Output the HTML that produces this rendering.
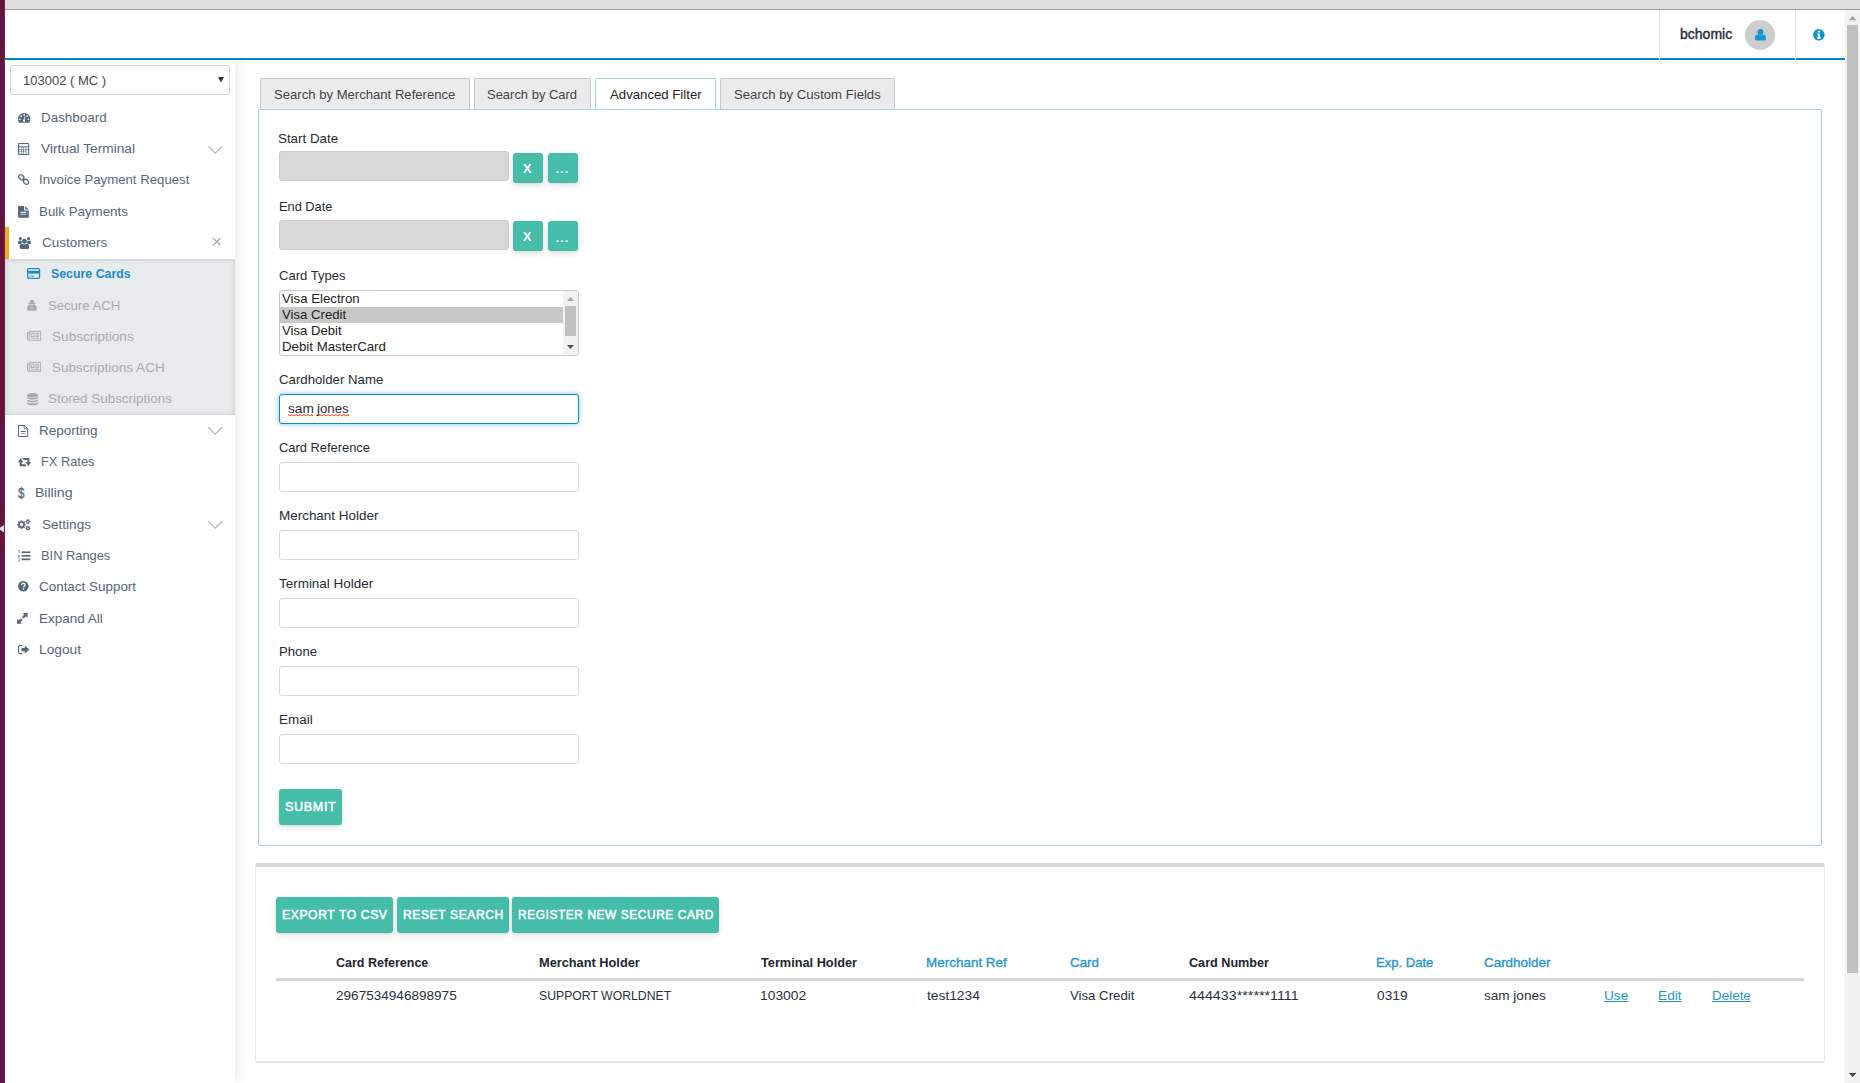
<!DOCTYPE html>
<html lang="en">
<head>
<meta charset="utf-8">
<title>Secure Cards</title>
<style>
*{box-sizing:border-box}
html,body{margin:0;padding:0}
body{width:1860px;height:1083px;overflow:hidden;background:#fff;position:relative;font-family:"Liberation Sans",sans-serif;font-size:13px;color:#2b2b2b}
.a{position:absolute}
.t{position:absolute;white-space:pre;font-size:13px;transform-origin:0 50%;display:block}
a.t{text-decoration:underline}
.topbar{left:0;top:0;width:1860px;height:9px;background:#dedede}
.topline{left:0;top:9px;width:1860px;height:1px;background:#9b9b9b}
.strip{left:0;top:0;width:5px;height:1083px;background:linear-gradient(90deg,#66133d 0,#66133d 4px,#6f2555 4px,#6f2555 5px)}
.header{left:5px;top:10px;width:1840px;height:48px;background:#fff}
.hline{left:5px;top:58px;width:1840px;height:2px;background:#0087c4}
.sep{top:10px;width:1px;height:50px;background:#e6e6e6}
.avatar{left:1745px;top:20px;width:30px;height:30px;border-radius:50%;background:#cdcdcd}
.sbar{left:1845px;top:10px;width:15px;height:1073px;background:#f0f2f1}
.sthumb{left:1847px;top:25px;width:11px;height:948px;background:#c1c1c1}
.sidebar{left:5px;top:60px;width:230px;height:1023px;background:#fff;box-shadow:1px 0 12px rgba(0,0,0,.10)}
.sel{left:10px;top:65px;width:220px;height:30px;border:1px solid #d3d3d3;border-radius:3px;background:#fff}
.orange{left:5px;top:227px;width:4px;height:32px;background:#f3ae1c}
.submenu{left:5px;top:259px;width:230px;height:155.5px;background:#e7ebeb;box-shadow:inset 0 3px 4px -2px rgba(0,0,0,.10),inset 0 -3px 4px -2px rgba(0,0,0,.10),inset -4px 0 5px -3px rgba(0,0,0,.08),inset 4px 0 5px -3px rgba(0,0,0,.08)}
.tab{top:78px;height:31px;border:1px solid #c9c9c9;border-bottom:none;border-radius:2px 2px 0 0;background:#ebebeb}
.tab.on{background:#fff;border-color:#a3d3de}
.panel{left:258px;top:109px;width:1564px;height:737px;border:1px solid #a3d3de;border-radius:2px;background:#fff}
.dinp{left:279px;width:230px;height:30px;border:1px solid #ccc;border-radius:3px;background:#d8d8d8}
.inp{left:279px;width:300px;height:30px;border:1px solid #d8d8d8;border-radius:3px;background:#fff}
.inp.focus{border-color:#0b8dc6;box-shadow:0 0 5px rgba(11,141,198,.5)}
.btn{background:#45bda8;border-radius:3px;box-shadow:0 3px 7px rgba(0,0,0,.10),0 1px 3px rgba(0,0,0,.07)}
.lbox{left:279px;top:290px;width:300px;height:66px;border:1px solid #c8c8c8;border-radius:3px;background:#fff;overflow:hidden}
.lsel{left:280px;top:307px;width:283px;height:16px;background:#c8c8c8}
.ltrack{left:563px;top:291px;width:15px;height:64px;background:#f1f1f1}
.lthumb{left:565px;top:306px;width:11px;height:30px;background:#c1c1c1}
.card{left:255px;top:863px;width:1570px;height:200px;border:1px solid #e6e6e6;border-top:4px solid #d6d6d6;border-bottom:2px solid #e3e3e3;border-radius:2px;background:#fff;}
.thline{left:276px;top:978px;width:1528px;height:3px;background:#d8d8d8}
svg.a{overflow:visible}

</style>
</head>
<body>
<div class="a topbar"></div>
<div class="a topline"></div>
<!-- page scrollbar -->
<div class="a sbar"></div>
<div class="a sthumb"></div>
<svg class="a" style="left:1848.8px;top:15.8px" width="7.4" height="4.2" viewBox="0 0 7.4 4.2"><path d="M0 4.2 L3.7 0 L7.4 4.2 Z" fill="#a0a0a0"/></svg>
<svg class="a" style="left:1848.8px;top:1072.5px" width="7.4" height="4.3" viewBox="0 0 7.4 4.3"><path d="M0 0 L7.4 0 L3.7 4.3 Z" fill="#484848"/></svg>

<!-- main content -->
<div class="a panel"></div>
<div class="a tab" style="left:260px;width:210px"></div>
<div class="a tab" style="left:474px;width:117px"></div>
<div class="a tab on" style="left:595px;width:121px"></div>
<div class="a tab" style="left:720px;width:175px"></div>

<div class="a dinp" style="top:151px"></div>
<div class="a btn" style="left:513px;top:153px;width:30px;height:30px"></div>
<div class="a btn" style="left:548px;top:153px;width:30px;height:30px"></div>
<div class="a dinp" style="top:220px"></div>
<div class="a btn" style="left:513px;top:221px;width:30px;height:30px"></div>
<div class="a btn" style="left:548px;top:221px;width:30px;height:30px"></div>

<div class="a lbox"></div>
<div class="a lsel"></div>
<div class="a ltrack"></div>
<div class="a lthumb"></div>
<svg class="a" style="left:567px;top:297px" width="7" height="4" viewBox="0 0 7 4"><path d="M0 4 L3.5 0 L7 4 Z" fill="#a3a3a3"/></svg>
<svg class="a" style="left:567px;top:345px" width="7" height="4" viewBox="0 0 7 4"><path d="M0 0 L7 0 L3.5 4 Z" fill="#505050"/></svg>

<div class="a inp focus" style="top:394px"></div>
<!-- squiggle -->
<svg class="a" style="left:288px;top:413.7px" width="25.0" height="2.6" viewBox="0 0 25.0 2.6"><path d="M0 0.6 L2.0 1.9 L4.0 0.6 L6.0 1.9 L8.0 0.6 L10.0 1.9 L12.0 0.6 L14.0 1.9 L16.0 0.6 L18.0 1.9 L20.0 0.6 L22.0 1.9 L24.0 0.6 L25.0 1.9" fill="none" stroke="#ff4a3d" stroke-width="1.1" stroke-linejoin="round"/></svg>
<svg class="a" style="left:316px;top:413.7px" width="33.0" height="2.6" viewBox="0 0 33.0 2.6"><path d="M0 0.6 L2.0 1.9 L4.0 0.6 L6.0 1.9 L8.0 0.6 L10.0 1.9 L12.0 0.6 L14.0 1.9 L16.0 0.6 L18.0 1.9 L20.0 0.6 L22.0 1.9 L24.0 0.6 L26.0 1.9 L28.0 0.6 L30.0 1.9 L32.0 0.6 L33.0 1.9" fill="none" stroke="#ff4a3d" stroke-width="1.1" stroke-linejoin="round"/></svg>
<div class="a inp" style="top:462px"></div>
<div class="a inp" style="top:530px"></div>
<div class="a inp" style="top:598px"></div>
<div class="a inp" style="top:666px"></div>
<div class="a inp" style="top:734px"></div>
<div class="a btn" style="left:279px;top:789px;width:63px;height:36px"></div>

<div class="a card"></div>
<div class="a btn" style="left:276px;top:897px;width:117px;height:36px"></div>
<div class="a btn" style="left:397px;top:897px;width:112px;height:36px"></div>
<div class="a btn" style="left:512px;top:897px;width:207px;height:36px"></div>
<div class="a thline"></div>

<!-- sidebar -->
<div class="a sidebar"></div>
<div class="a sel"></div>
<svg class="a" style="left:218.1px;top:77px" width="6" height="5.6" viewBox="0 0 6 5.6"><path d="M0 0 L6 0 L3 5.6 Z" fill="#333"/></svg>
<div class="a orange"></div>
<div class="a submenu"></div>
<div class="a header"></div>
<div class="a hline"></div>
<div class="a sep" style="left:1659px"></div>
<div class="a sep" style="left:1795px"></div>
<div class="a avatar"></div>
<div class="a strip"></div>
<svg class="a" style="left:0;top:524.8px;overflow:hidden" width="4" height="7.4" viewBox="0 0 4 7.4"><path d="M4 0 L4 7.4 L-1.6 3.7 Z" fill="#dfe1df"/></svg>

<!-- icons -->
<svg class="a" style="left:17.7px;top:113px" width="12.4" height="9.8" viewBox="0 0 12.4 9.8"><path d="M6.2 0A6.2 6.2 0 0 0 0 6.2c0 1.3.4 2.5 1 3.4.1.1.3.2.4.2h9.6c.2 0 .3-.1.4-.2.6-1 1-2.1 1-3.4A6.2 6.2 0 0 0 6.200 0z" fill="#54667a"/><g fill="#fff"><circle cx="1.9" cy="6.3" r=".85"/><circle cx="3.2" cy="3.2" r=".85"/><circle cx="6.2" cy="1.9" r=".85"/><circle cx="9.2" cy="3.2" r=".85"/><circle cx="10.5" cy="6.300" r=".85"/><circle cx="6" cy="7.7" r="1.15"/></g><path d="M6 7.700L6.800 3.900" stroke="#fff" stroke-width=".8" stroke-linecap="round"/></svg>
<svg class="a" style="left:17.8px;top:142.8px" width="11.2" height="12" viewBox="0 0 11.2 12"><rect x="0" y="0" width="11.2" height="12" rx="1" fill="#54667a"/><g fill="#fff"><rect x="1.1" y="1.1" width="9.05" height="2.2"/><rect x="1.1" y="4.3" width="1.85" height="1.8"/><rect x="1.1" y="6.7" width="1.85" height="1.8"/><rect x="1.1" y="9.1" width="1.85" height="1.8"/><rect x="3.5" y="4.3" width="1.85" height="1.8"/><rect x="3.5" y="6.7" width="1.85" height="1.8"/><rect x="3.5" y="9.1" width="1.85" height="1.8"/><rect x="5.9" y="4.3" width="1.85" height="1.8"/><rect x="5.9" y="6.7" width="1.85" height="1.8"/><rect x="5.9" y="9.1" width="1.85" height="1.8"/><rect x="8.3" y="4.3" width="1.85" height="1.8"/><rect x="8.3" y="6.7" width="1.85" height="4.2"/></g></svg>
<svg class="a" style="left:17.8px;top:173.8px" width="11.3" height="11" viewBox="0 0 11.3 11"><g fill="none" stroke="#54667a" stroke-width="1.3"><rect x="-2.9" y="-2.1" width="5.8" height="4.2" rx="2.1" transform="translate(3.3 3.2) rotate(45)"/><rect x="-2.9" y="-2.1" width="5.8" height="4.2" rx="2.1" transform="translate(8 7.800) rotate(45)"/><path d="M4.700 4.600L6.600 6.400"/></g></svg>
<svg class="a" style="left:17.8px;top:206px" width="10.8" height="11.7" viewBox="0 0 10.8 11.7"><path d="M0 .8A.8.8 0 0 1 .8 0H6.100V3.800a.8.8 0 0 0 .8.8H10.800V10.900a.8.8 0 0 1-.8.8H.8a.8.8 0 0 1-.8-.8zM7.100 0.100L10.700 3.600H7.100z" fill="#54667a"/><rect x="2.400" y="5.800" width="6" height="1" fill="#fff"/><rect x="2.400" y="7.800" width="6" height="1.100" fill="#c9d0d6"/></svg>
<svg class="a" style="left:17.8px;top:236.7px" width="12.9" height="12" viewBox="0 0 12.9 12"><g fill="#54667a"><circle cx="6.45" cy="4.2" r="2.45"/><path d="M1.700 10.200c0-2.400 1-3.500 2.400-3.500.600.500 1.450.800 2.350.800s1.750-.300 2.350-.800c1.400 0 2.400 1.100 2.400 3.500 0 1.100-.7 1.800-1.800 1.800H3.500c-1.100 0-1.800-.7-1.800-1.800z"/><circle cx="2.350" cy="1.600" r="1.550"/><circle cx="10.550" cy="1.600" r="1.550"/><path d="M0 5.700c0-1.500.6-2.300 1.400-2.300.4.300.9.450 1.400.450.300 0 .55-.050.800-.150-.050.200-.050.400-.050.600 0 .700.200 1.350.550 1.900-.65.050-1.200.300-1.650.800H1.300C.5 7 0 6.600 0 5.700z"/><path d="M12.900 5.700c0-1.500-.6-2.300-1.400-2.300-.4.300-.9.450-1.400.450-.300 0-.55-.050-.800-.150.050.200.050.400.050.600 0 .700-.200 1.350-.550 1.900.65.050 1.200.300 1.650.800H11.600c.8 0 1.300-.4 1.300-1.300z"/></g></svg>
<svg class="a" style="left:27px;top:268px" width="13.2" height="11" viewBox="0 0 13.2 11"><rect x=".6" y=".6" width="12" height="9.800" rx="1.100" fill="none" stroke="#1a8ccb" stroke-width="1.200"/><rect x=".6" y="2.800" width="12" height="2.800" fill="#1a8ccb"/><rect x="2.200" y="7.700" width="1.600" height=".9" fill="#1a8ccb"/><rect x="4.400" y="7.700" width="2.400" height=".9" fill="#1a8ccb"/></svg>
<svg class="a" style="left:27px;top:299.9px" width="9.8" height="10.8" viewBox="0 0 9.8 10.8"><g fill="#a3a8ac"><path d="M2.600 2.700L3.300.400C3.400.100 3.700 0 4 .100L4.900.500 5.800.100c.3-.1.600 0 .7.300l.7 2.300z"/><path d="M1 3.400c1-.5 2.400-.8 3.900-.8s2.900.3 3.900.8c0 .4-1.700.9-3.900.9S1 3.800 1 3.400z"/><path d="M0 8.800C0 6.600 1 5.200 2.400 4.600c.7.300 1.600.4 2.500.4s1.800-.1 2.500-.4C8.800 5.200 9.800 6.600 9.800 8.800c0 1.200-.8 2-2 2H2c-1.200 0-2-.8-2-2z"/></g><g fill="#e7ebeb" opacity=".75"><rect x="3.700" y="6.300" width=".7" height="3.200"/><rect x="5.400" y="6.300" width=".7" height="3.200"/></g></svg>
<svg class="a" style="left:27px;top:331px" width="14" height="9.8" viewBox="0 0 14 9.8"><g fill="none" stroke="#a3a8ac" stroke-width=".9"><path d="M2.300.45H13.550V9.300H2.300z"/><path d="M2.300 1.700H.45V8.200c0 .6.400 1.100 1 1.100h1"/><rect x="4" y="2.300" width="3" height="3.200"/></g><g fill="#a3a8ac"><rect x="8.300" y="2.100" width="3.800" height=".9"/><rect x="8.300" y="3.700" width="3.800" height=".9"/><rect x="8.300" y="5.300" width="3.800" height=".9"/><rect x="4" y="6.900" width="3.400" height=".9"/><rect x="8.300" y="6.900" width="3.800" height=".9"/></g></svg>
<svg class="a" style="left:27px;top:362.2px" width="14" height="9.8" viewBox="0 0 14 9.8"><g fill="none" stroke="#a3a8ac" stroke-width=".9"><path d="M2.300.45H13.550V9.300H2.300z"/><path d="M2.300 1.700H.45V8.200c0 .6.400 1.100 1 1.100h1"/><rect x="4" y="2.300" width="3" height="3.200"/></g><g fill="#a3a8ac"><rect x="8.300" y="2.100" width="3.800" height=".9"/><rect x="8.300" y="3.700" width="3.800" height=".9"/><rect x="8.300" y="5.300" width="3.800" height=".9"/><rect x="4" y="6.900" width="3.400" height=".9"/><rect x="8.300" y="6.900" width="3.800" height=".9"/></g></svg>
<svg class="a" style="left:26.7px;top:392.7px" width="11.2" height="12.4" viewBox="0 0 11.2 12.4"><g fill="#a3a8ac"><ellipse cx="5.600" cy="2.150" rx="5.600" ry="2.150"/><path d="M0 3.3v1.100c0 1.200 2.500 2.100 5.600 2.100s5.600-.9 5.600-2.100V3.3c-1 1-3.100 1.500-5.600 1.500S1 4.3 0 3.3z"/><path d="M0 6.2v1.100c0 1.200 2.500 2.100 5.600 2.100s5.600-.9 5.600-2.100V6.2c-1 1-3.100 1.500-5.600 1.500S1 7.2 0 6.2z"/><path d="M0 9.1v1.100c0 1.200 2.500 2.100 5.600 2.100s5.600-.9 5.600-2.100V9.1c-1 1-3.100 1.500-5.600 1.500S1 10.1 0 9.1z"/></g></svg>
<svg class="a" style="left:17.8px;top:425px" width="10.2" height="12" viewBox="0 0 10.2 12"><g fill="none" stroke="#54667a" stroke-width="1"><path d="M.5.500H6.300L9.700 3.700V11.500H.5z" stroke-linejoin="round"/><path d="M6.200.600V3.800H9.600" stroke-width=".9"/></g><rect x="2.600" y="6" width="5" height="1" fill="#54667a"/><rect x="2.600" y="8" width="5" height="1.100" fill="#9aa5af"/></svg>
<svg class="a" style="left:17.8px;top:457.8px" width="13.1" height="8.3" viewBox="0 0 13.1 8.3"><g fill="#54667a"><path d="M0 4.300L2.700 0 5.400 4.300H3.800V6.200H7.400L8.900 8.300H1.700V4.300z"/><path d="M13.100 4L10.400 8.300 7.700 4H9.300V2.100H5.700L4.200 0H11.400V4z"/></g></svg>
<svg class="a" style="left:17.3px;top:518.8px" width="13.8" height="11.8" viewBox="0 0 13.8 11.8"><path fill-rule="evenodd" fill="#54667a" d="M7.66 4.65 L8.84 4.88 L8.84 6.32 L7.66 6.55 L7.40 7.17 L8.08 8.16 L7.06 9.18 L6.07 8.50 L5.45 8.76 L5.22 9.94 L3.78 9.94 L3.55 8.76 L2.93 8.50 L1.94 9.18 L0.92 8.16 L1.60 7.17 L1.34 6.55 L0.16 6.32 L0.16 4.88 L1.34 4.65 L1.60 4.03 L0.92 3.04 L1.94 2.02 L2.93 2.70 L3.55 2.44 L3.78 1.26 L5.22 1.26 L5.45 2.44 L6.07 2.70 L7.06 2.02 L8.08 3.04 L7.40 4.03Z M6.25 5.60 A1.75 1.75 0 1 0 2.75 5.60 A1.75 1.75 0 1 0 6.25 5.60Z M12.57 1.92 L13.34 2.05 L13.34 3.15 L12.57 3.28 L12.32 3.70 L12.59 4.44 L11.65 4.99 L11.14 4.38 L10.66 4.38 L10.15 4.99 L9.21 4.44 L9.48 3.70 L9.23 3.28 L8.46 3.15 L8.46 2.05 L9.23 1.92 L9.48 1.50 L9.21 0.76 L10.15 0.21 L10.66 0.82 L11.14 0.82 L11.65 0.21 L12.59 0.76 L12.32 1.50Z M11.70 2.60 A0.8 0.8 0 1 0 10.10 2.60 A0.8 0.8 0 1 0 11.70 2.60Z M12.57 8.52 L13.34 8.65 L13.34 9.75 L12.57 9.88 L12.32 10.30 L12.59 11.04 L11.65 11.59 L11.14 10.98 L10.66 10.98 L10.15 11.59 L9.21 11.04 L9.48 10.30 L9.23 9.88 L8.46 9.75 L8.46 8.65 L9.23 8.52 L9.48 8.10 L9.21 7.36 L10.15 6.81 L10.66 7.42 L11.14 7.42 L11.65 6.81 L12.59 7.36 L12.32 8.10Z M11.70 9.20 A0.8 0.8 0 1 0 10.10 9.20 A0.8 0.8 0 1 0 11.70 9.20Z"/></svg>
<svg class="a" style="left:17.7px;top:550px" width="12.4" height="12" viewBox="0 0 12.4 12"><g fill="#54667a"><rect x="3.600" y="1.400" width="8.800" height="1.700"/><rect x="3.600" y="4.950" width="8.800" height="1.700"/><rect x="3.600" y="8.500" width="8.800" height="1.700"/><path d="M.8.200h.7V3H.8V1.100L.2 1.400V.700z"/><path d="M.1 4.700h1.500V6L.9 6.800h.8v.6H.1V6.800L1 5.700V5.300H.1z"/><path d="M.1 8.400h1.500v1.300l-.3.300.3.300v1.300H.1V11h.9v-.6H.5v-.6h.5V9H.1z"/></g></svg>
<svg class="a" style="left:17.7px;top:581.3px" width="10.6" height="10.6" viewBox="0 0 10.6 10.6"><circle cx="5.300" cy="5.300" r="5.300" fill="#54667a"/><path d="M3.600 4.100c0-1 .7-1.700 1.750-1.700s1.750.6 1.750 1.500c0 1.200-1.500 1.300-1.500 2.500" fill="none" stroke="#fff" stroke-width="1.250"/><rect x="4.900" y="7.200" width="1.300" height="1.300" fill="#fff"/></svg>
<svg class="a" style="left:17.4px;top:613.1px" width="10.6" height="10.8" viewBox="0 0 10.6 10.8"><g fill="#54667a"><path d="M5.700 0H10.600V4.900L9 3.300 6.700 5.600 5 3.900 7.300 1.600z"/><path d="M0 5.900L1.600 7.500 3.900 5.200 5.600 6.900 3.300 9.200 4.900 10.800H0z"/></g></svg>
<svg class="a" style="left:17.7px;top:645.1px" width="11.4" height="9.2" viewBox="0 0 11.4 9.2"><path d="M4.300.550H2.100A1.550 1.550 0 0 0 .550 2.100V7.100A1.550 1.550 0 0 0 2.100 8.650H4.300" fill="none" stroke="#54667a" stroke-width="1.100"/><path d="M3.500 2.900H6.800V.5L11.400 4.600 6.800 8.700V6.300H3.500z" fill="#54667a"/></svg>
<svg class="a" style="left:208px;top:145.8px" width="14.4" height="7.6" viewBox="0 0 14.4 7.6"><path d="M.3.300L7.200 7.100 14.100.300" fill="none" stroke="#b3b5b7" stroke-width="1.2"/></svg>
<svg class="a" style="left:208px;top:426.6px" width="14.4" height="7.6" viewBox="0 0 14.4 7.6"><path d="M.3.300L7.200 7.100 14.100.300" fill="none" stroke="#b3b5b7" stroke-width="1.2"/></svg>
<svg class="a" style="left:208px;top:520.5px" width="14.4" height="7.6" viewBox="0 0 14.4 7.6"><path d="M.3.300L7.200 7.100 14.100.300" fill="none" stroke="#b3b5b7" stroke-width="1.2"/></svg>
<svg class="a" style="left:212.7px;top:238.4px" width="7.6" height="7.6" viewBox="0 0 7.6 7.6"><path d="M.3.300L7.300 7.300M7.300.300L.3 7.300" fill="none" stroke="#a6a8aa" stroke-width="1.25"/></svg>
<svg class="a" style="left:1754.8px;top:28.6px" width="11" height="11.5" viewBox="0 0 11 11.5"><circle cx="5.450" cy="3" r="3" fill="#1296d1"/><path d="M0 8.300C0 6.500 1.100 5.400 2.600 5.400c.8.500 1.800.8 2.850.8s2.050-.3 2.850-.8C9.800 5.400 10.900 6.500 10.900 8.300v2c0 .6-.5 1.100-1.100 1.100H1.100C.5 11.400 0 10.900 0 10.300z" fill="#1296d1"/></svg>
<svg class="a" style="left:1813.2px;top:28.7px" width="11.6" height="11.6" viewBox="0 0 11.6 11.6"><circle cx="5.800" cy="5.800" r="5.800" fill="#1296d1"/><g fill="#fff"><rect x="4.900" y="1.700" width="2" height="1.700" rx=".3"/><path d="M4.300 4.600H6.900V8.300H7.700V9.700H4.100V8.300H4.900V5.900H4.300z"/></g></svg>

<!-- text layer -->
<header>
<span class="t" style="left:1679.75px;top:23px;line-height:22px;font-size:14px;color:#1f2d3d;transform:scaleX(1.0010);-webkit-text-stroke:0.4px #1f2d3d;">bchomic</span>
</header>
<nav>
<span class="t" style="left:23.10px;top:70px;line-height:21px;color:#474747;transform:scaleX(0.9994);">103002 ( MC )</span>
<span class="t" style="left:40.57px;top:107px;line-height:21px;color:#54667a;transform:scaleX(1.0316);">Dashboard</span>
<span class="t" style="left:41.34px;top:138px;line-height:21px;color:#54667a;transform:scaleX(1.0545);">Virtual Terminal</span>
<span class="t" style="left:39.13px;top:169px;line-height:21px;color:#54667a;transform:scaleX(1.0147);">Invoice Payment Request</span>
<span class="t" style="left:38.57px;top:201px;line-height:21px;color:#54667a;transform:scaleX(1.0252);">Bulk Payments</span>
<span class="t" style="left:41.52px;top:232px;line-height:21px;color:#54667a;transform:scaleX(1.0364);">Customers</span>
<span class="t" style="left:51.22px;top:263px;line-height:21px;font-weight:700;color:#1a8ccb;transform:scaleX(0.9511);">Secure Cards</span>
<span class="t" style="left:47.94px;top:295px;line-height:21px;color:#a6abaf;transform:scaleX(1.0079);">Secure ACH</span>
<span class="t" style="left:51.51px;top:326px;line-height:21px;color:#a6abaf;transform:scaleX(1.0476);">Subscriptions</span>
<span class="t" style="left:51.52px;top:357px;line-height:21px;color:#a6abaf;transform:scaleX(1.0394);">Subscriptions ACH</span>
<span class="t" style="left:47.93px;top:388px;line-height:21px;color:#a6abaf;transform:scaleX(1.0324);">Stored Subscriptions</span>
<span class="t" style="left:38.56px;top:420px;line-height:21px;color:#54667a;transform:scaleX(1.0404);">Reporting</span>
<span class="t" style="left:41.31px;top:451px;line-height:21px;color:#54667a;transform:scaleX(0.9858);">FX Rates</span>
<span class="t" style="left:35.22px;top:482px;line-height:21px;color:#54667a;transform:scaleX(1.0809);">Billing</span>
<span class="t" style="left:18.00px;top:482px;line-height:22px;font-size:14.5px;color:#54667a;transform:scaleX(0.8000);-webkit-text-stroke:0.35px #54667a;">$</span>
<span class="t" style="left:41.52px;top:514px;line-height:21px;color:#54667a;transform:scaleX(1.0426);">Settings</span>
<span class="t" style="left:40.61px;top:545px;line-height:21px;color:#54667a;transform:scaleX(0.9883);">BIN Ranges</span>
<span class="t" style="left:38.83px;top:576px;line-height:21px;color:#54667a;transform:scaleX(1.0333);">Contact Support</span>
<span class="t" style="left:38.56px;top:608px;line-height:21px;color:#54667a;transform:scaleX(1.0370);">Expand All</span>
<span class="t" style="left:39.24px;top:639px;line-height:21px;color:#54667a;transform:scaleX(1.0581);">Logout</span>
</nav>
<main>
<span class="t" style="left:274.04px;top:84px;line-height:21px;color:#444;transform:scaleX(1.0078);">Search by Merchant Reference</span>
<span class="t" style="left:487.25px;top:84px;line-height:21px;color:#444;transform:scaleX(0.9972);">Search by Card</span>
<span class="t" style="left:609.70px;top:84px;line-height:21px;color:#222;transform:scaleX(1.0144);">Advanced Filter</span>
<span class="t" style="left:733.54px;top:84px;line-height:21px;color:#444;transform:scaleX(1.0104);">Search by Custom Fields</span>
<span class="t" style="left:278.43px;top:128px;line-height:21px;color:#252c33;transform:scaleX(1.0271);">Start Date</span>
<span class="t" style="left:278.62px;top:196px;line-height:21px;color:#252c33;transform:scaleX(0.9839);">End Date</span>
<span class="t" style="left:278.65px;top:265px;line-height:21px;color:#252c33;transform:scaleX(1.0046);">Card Types</span>
<span class="t" style="left:278.64px;top:369px;line-height:21px;color:#252c33;transform:scaleX(1.0163);">Cardholder Name</span>
<span class="t" style="left:278.66px;top:437px;line-height:21px;color:#252c33;transform:scaleX(0.9912);">Card Reference</span>
<span class="t" style="left:278.57px;top:505px;line-height:21px;color:#252c33;transform:scaleX(1.0343);">Merchant Holder</span>
<span class="t" style="left:278.94px;top:573px;line-height:21px;color:#252c33;transform:scaleX(1.0343);">Terminal Holder</span>
<span class="t" style="left:278.59px;top:641px;line-height:21px;color:#252c33;transform:scaleX(1.0111);">Phone</span>
<span class="t" style="left:278.57px;top:709px;line-height:21px;color:#252c33;transform:scaleX(1.0341);">Email</span>
<span class="t" style="left:287.67px;top:398px;line-height:21px;color:#2b2b2b;transform:scaleX(1.0538);">sam</span>
<span class="t" style="left:317.26px;top:398px;line-height:21px;color:#2b2b2b;transform:scaleX(1.0211);">jones</span>
<span class="t" style="left:281.95px;top:288px;line-height:21px;color:#222;transform:scaleX(1.0179);">Visa Electron</span>
<span class="t" style="left:281.95px;top:304px;line-height:21px;color:#222;transform:scaleX(1.0127);">Visa Credit</span>
<span class="t" style="left:281.95px;top:320px;line-height:21px;color:#222;transform:scaleX(1.0094);">Visa Debit</span>
<span class="t" style="left:281.78px;top:336px;line-height:21px;color:#222;transform:scaleX(1.0200);">Debit MasterCard</span>
<span class="t" style="left:523.45px;top:159px;line-height:20px;font-size:12.5px;font-weight:700;color:#fff;transform:scaleX(1.0125);">X</span>
<span class="t" style="left:555.32px;top:158px;line-height:21px;color:#fff;transform:scaleX(1.2800);-webkit-text-stroke:0.15px #fff;">...</span>
<span class="t" style="left:523.45px;top:227px;line-height:20px;font-size:12.5px;font-weight:700;color:#fff;transform:scaleX(1.0125);">X</span>
<span class="t" style="left:555.32px;top:227px;line-height:21px;color:#fff;transform:scaleX(1.2800);-webkit-text-stroke:0.15px #fff;">...</span>
<span class="t" style="left:284.94px;top:797px;line-height:20px;font-size:12px;color:#fff;transform:scaleX(1.0500);letter-spacing:.6px;-webkit-text-stroke:0.5px #fff;">SUBMIT</span>
<span class="t" style="left:281.54px;top:905px;line-height:20px;font-size:12px;color:#fff;transform:scaleX(1.0121);letter-spacing:.6px;-webkit-text-stroke:0.5px #fff;">EXPORT TO CSV</span>
<span class="t" style="left:402.55px;top:905px;line-height:20px;font-size:12px;color:#fff;transform:scaleX(1.0056);letter-spacing:.6px;-webkit-text-stroke:0.5px #fff;">RESET SEARCH</span>
<span class="t" style="left:517.66px;top:905px;line-height:20px;font-size:12px;color:#fff;transform:scaleX(0.9903);letter-spacing:.6px;-webkit-text-stroke:0.5px #fff;">REGISTER NEW SECURE CARD</span>
</main>
<section>
<span class="t" style="left:336.02px;top:952px;line-height:21px;font-weight:700;color:#1c2530;transform:scaleX(0.9606);">Card Reference</span>
<span class="t" style="left:538.76px;top:952px;line-height:21px;font-weight:700;color:#1c2530;transform:scaleX(0.9823);">Merchant Holder</span>
<span class="t" style="left:761.06px;top:952px;line-height:21px;font-weight:700;color:#1c2530;transform:scaleX(0.9795);">Terminal Holder</span>
<span class="t" style="left:926.16px;top:952px;line-height:21px;color:#1f96d2;transform:scaleX(1.0356);-webkit-text-stroke:0.35px #1f96d2;">Merchant Ref</span>
<span class="t" style="left:1069.69px;top:952px;line-height:21px;color:#1f96d2;transform:scaleX(1.0296);-webkit-text-stroke:0.35px #1f96d2;">Card</span>
<span class="t" style="left:1188.61px;top:952px;line-height:21px;font-weight:700;color:#1c2530;transform:scaleX(0.9713);">Card Number</span>
<span class="t" style="left:1376.40px;top:952px;line-height:21px;color:#1f96d2;transform:scaleX(1.0045);-webkit-text-stroke:0.35px #1f96d2;">Exp. Date</span>
<span class="t" style="left:1483.68px;top:952px;line-height:21px;color:#1f96d2;transform:scaleX(1.0322);-webkit-text-stroke:0.35px #1f96d2;">Cardholder</span>
<span class="t" style="left:335.72px;top:985px;line-height:21px;color:#27303a;transform:scaleX(1.0433);">2967534946898975</span>
<span class="t" style="left:538.79px;top:985px;line-height:21px;color:#27303a;transform:scaleX(0.9415);">SUPPORT WORLDNET</span>
<span class="t" style="left:760.24px;top:985px;line-height:21px;color:#27303a;transform:scaleX(1.0635);">103002</span>
<span class="t" style="left:926.94px;top:985px;line-height:21px;color:#27303a;transform:scaleX(1.0599);">test1234</span>
<span class="t" style="left:1069.95px;top:985px;line-height:21px;color:#27303a;transform:scaleX(1.0159);">Visa Credit</span>
<span class="t" style="left:1188.83px;top:985px;line-height:21px;color:#27303a;transform:scaleX(1.0997);">444433******1111</span>
<span class="t" style="left:1376.87px;top:985px;line-height:21px;color:#27303a;transform:scaleX(1.0559);">0319</span>
<span class="t" style="left:1483.68px;top:985px;line-height:21px;color:#27303a;transform:scaleX(1.0421);">sam jones</span>
<a href="#" class="t" style="left:1604.15px;top:985px;line-height:21px;color:#1f96d2;transform:scaleX(1.0512);text-decoration:underline;">Use</a>
<a href="#" class="t" style="left:1658.05px;top:985px;line-height:21px;color:#1f96d2;transform:scaleX(1.0541);text-decoration:underline;">Edit</a>
<a href="#" class="t" style="left:1712.27px;top:985px;line-height:21px;color:#1f96d2;transform:scaleX(1.0333);text-decoration:underline;">Delete</a>
</section>
</body>
</html>
